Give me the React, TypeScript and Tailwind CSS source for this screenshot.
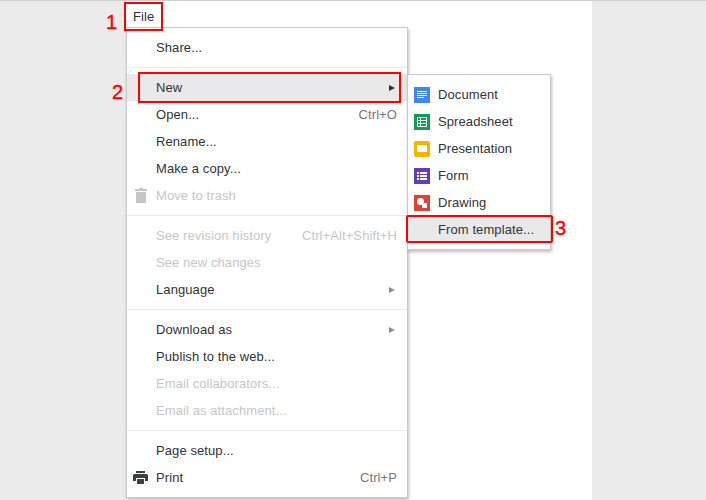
const font = "font-['Liberation_Sans',Arial,sans-serif]";

function Row({
  label,
  shortcut,
  disabled,
  arrow,
  active,
  icon,
}: {
  label: string;
  shortcut?: string;
  disabled?: boolean;
  arrow?: boolean;
  active?: boolean;
  icon?: React.ReactNode;
}) {
  return (
    <div
      className={`flex h-[27px] items-center pr-[10px] text-[13px] tracking-[0.09px] ${
        active ? "bg-[#e9e9e9]" : ""
      } ${disabled ? "text-[#c6c6c6]" : "text-[#333333]"}`}
    >
      <div className="flex w-[29px] shrink-0 justify-center pr-[2px]">{icon}</div>
      <span className="flex-1">{label}</span>
      {shortcut && (
        <span className={disabled ? "text-[#c6c6c6]" : "text-[#777777]"}>{shortcut}</span>
      )}
      {arrow && (
        <svg width="6" height="6" viewBox="0 0 6 6" className="mr-[2px]">
          <path d="M0 0 L6 3 L0 6 Z" fill={active ? "#333333" : "#8a8f8a"} />
        </svg>
      )}
    </div>
  );
}

const Sep = () => <div className="my-[6px] h-px bg-[#ebebeb]" />;

function SubRow({ label, icon, active }: { label: string; icon?: React.ReactNode; active?: boolean }) {
  return (
    <div
      className={`flex h-[27px] items-center gap-2 pl-[6px] text-[13px] tracking-[0.09px] text-[#333333] ${
        active ? "bg-[#e9e9e9]" : ""
      }`}
    >
      <div className="h-4 w-4">{icon}</div>
      <span>{label}</span>
    </div>
  );
}

const TrashIcon = (
  <svg width="12" height="15" viewBox="0 0 12 15">
    <path d="M4 0 H8 V1 H12 V3 H0 V1 H4 Z M1 4 H11 V15 H1 Z" fill="#c6c6c6" />
  </svg>
);

const PrintIcon = (
  <svg width="15" height="13" viewBox="0 0 15 13">
    <path
      d="M3 0 H12 V2 H3 Z M1.5 3 H13.5 Q15 3 15 4.5 V10 H12 V7 H3 V10 H0 V4.5 Q0 3 1.5 3 Z M4 8 H11 V13 H4 Z"
      fill="#3c4043"
    />
  </svg>
);

const DocIcon = (
  <svg width="16" height="16" viewBox="0 0 16 16" className="block">
    <rect width="16" height="16" fill="#4285f4" />
    <path d="M3 4 H13 V5 H3 Z M3 6 H13 V7 H3 Z M3 8 H13 V9 H3 Z M3 10 H10 V11 H3 Z" fill="#ffffff" />
  </svg>
);

const SheetIcon = (
  <svg width="16" height="16" viewBox="0 0 16 16" className="block">
    <rect width="16" height="16" fill="#0f9d58" />
    <path d="M3 3 H13 V13 H3 Z" fill="#ffffff" />
    <path d="M4 4 H6 V6 H4 Z M7 4 H12 V6 H7 Z M4 7 H6 V9 H4 Z M7 7 H12 V9 H7 Z M4 10 H6 V12 H4 Z M7 10 H12 V12 H7 Z" fill="#0f9d58" />
  </svg>
);

const SlideIcon = (
  <svg width="16" height="16" viewBox="0 0 16 16" className="block">
    <path d="M1 0 H15 V1 H16 V15 H15 V16 H1 V15 H0 V1 H1 Z" fill="#f4b400" />
    <rect x="3" y="4" width="10" height="7" fill="#ffffff" />
  </svg>
);

const FormIcon = (
  <svg width="16" height="16" viewBox="0 0 16 16" className="block">
    <rect width="16" height="16" fill="#673ab7" />
    <path d="M3 4 H5 V6 H3 Z M6 4 H13 V6 H6 Z M3 7 H5 V9 H3 Z M6 7 H13 V9 H6 Z M3 10 H5 V12 H3 Z M6 10 H13 V12 H6 Z" fill="#ffffff" />
  </svg>
);

const DrawIcon = (
  <svg width="16" height="16" viewBox="0 0 16 16" className="block">
    <rect width="16" height="16" fill="#db4437" />
    <rect x="8" y="8" width="5" height="5" fill="#ffffff" />
    <circle cx="6.5" cy="6.5" r="3.5" fill="#ffffff" />
  </svg>
);

export default function App() {
  return (
    <div className={`relative flex h-[500px] w-[706px] overflow-hidden bg-[#ebebeb] ${font}`}>
      <div className="ml-[126px] h-full w-[466px] border-t border-[#cfcfcf] bg-white pl-[7px] pt-[6px] text-[13px] tracking-[0.09px] text-[#333333]">
        File
      </div>
      <div className="absolute left-0 top-0 h-px w-full bg-[#cfcfcf]" />

      <div className="absolute left-[126px] top-[27px] w-[282px] border border-[#c9c9c9] bg-white py-[6px] shadow-[1px_2px_3px_rgba(0,0,0,0.25)]">
        <Row label="Share..." />
        <Sep />
        <Row label="New" arrow active />
        <Row label="Open..." shortcut="Ctrl+O" />
        <Row label="Rename..." />
        <Row label="Make a copy..." />
        <Row label="Move to trash" disabled icon={TrashIcon} />
        <Sep />
        <Row label="See revision history" shortcut="Ctrl+Alt+Shift+H" disabled />
        <Row label="See new changes" disabled />
        <Row label="Language" arrow />
        <Sep />
        <Row label="Download as" arrow />
        <Row label="Publish to the web..." />
        <Row label="Email collaborators..." disabled />
        <Row label="Email as attachment..." disabled />
        <Sep />
        <Row label="Page setup..." />
        <Row label="Print" shortcut="Ctrl+P" icon={PrintIcon} />
      </div>

      <div className="absolute left-[407px] top-[74px] w-[144px] border border-[#c9c9c9] bg-white py-[6px] shadow-[1px_2px_3px_rgba(0,0,0,0.25)]">
        <SubRow label="Document" icon={DocIcon} />
        <SubRow label="Spreadsheet" icon={SheetIcon} />
        <SubRow label="Presentation" icon={SlideIcon} />
        <SubRow label="Form" icon={FormIcon} />
        <SubRow label="Drawing" icon={DrawIcon} />
        <SubRow label="From template..." active />
      </div>

      <div className="absolute left-[124px] top-[2px] h-[29px] w-[39px] border-2 border-[#ff0000]" />
      <div className="absolute left-[138px] top-[72px] h-[31px] w-[263px] border-2 border-[#ff0000]" />
      <div className="absolute left-[406px] top-[215px] h-[28px] w-[147px] rounded-[2px] border-2 border-[#ff0000]" />

      <span className="absolute left-[106px] top-[11px] text-[20px] leading-[23px] text-[#ff0000] [-webkit-text-stroke:0.4px_#ff0000]">1</span>
      <span className="absolute left-[112px] top-[81px] text-[20px] leading-[23px] text-[#ff0000] [-webkit-text-stroke:0.4px_#ff0000]">2</span>
      <span className="absolute left-[555px] top-[217px] text-[20px] leading-[23px] text-[#ff0000] [-webkit-text-stroke:0.4px_#ff0000]">3</span>
    </div>
  );
}
